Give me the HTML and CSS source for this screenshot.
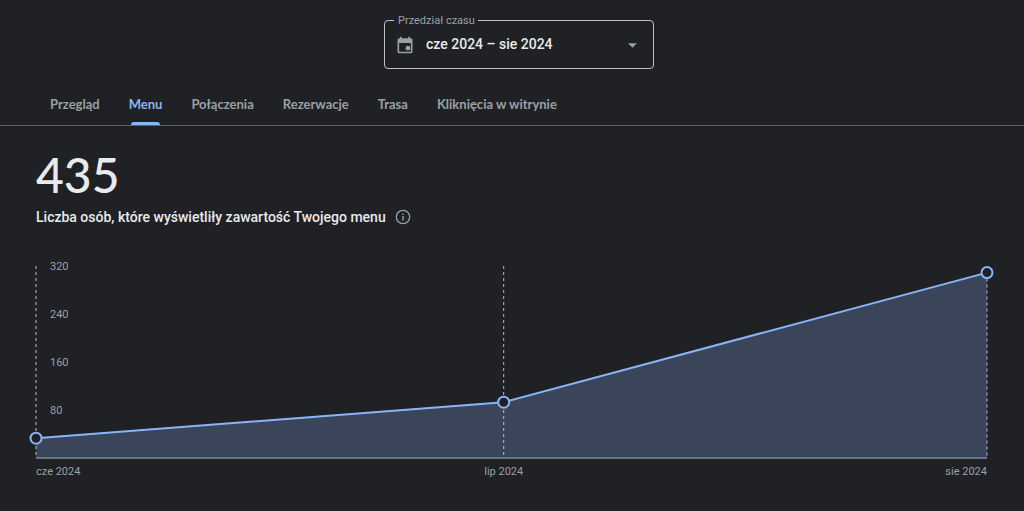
FILE: index.html
```html
<!DOCTYPE html>
<html lang="pl">
<head>
<meta charset="utf-8">
<meta name="viewport" content="width=device-width, initial-scale=1">
<title>Menu</title>
<link rel="stylesheet" href="styles.css">
</head>
<body>
<header class="toolbar">
  <div class="period">
    <label class="period-label" for="period">Przedział czasu</label>
    <svg class="period-icon" viewBox="0 0 24 24" aria-hidden="true"><path fill-rule="evenodd" d="M5 4h1V2h2v2h8V2h2v2h1a2 2 0 0 1 2 2v14a2 2 0 0 1-2 2H5a2 2 0 0 1-2-2V6a2 2 0 0 1 2-2zM5 9.500V20h14V9.500z"/><circle cx="15.500" cy="15.800" r="2.900"/></svg>
    <select class="period-select" id="period">
      <option>cze 2024 – sie 2024</option>
    </select>
    <svg class="period-arrow" viewBox="0 0 10 5" aria-hidden="true"><path d="M0 0h10L5 5z"/></svg>
  </div>
</header>
<nav class="tabs">
  <a class="tab" href="#overview">Przegląd</a>
  <a class="tab tab-active" href="#menu" aria-current="page">Menu</a>
  <a class="tab" href="#calls">Połączenia</a>
  <a class="tab" href="#bookings">Rezerwacje</a>
  <a class="tab" href="#directions">Trasa</a>
  <a class="tab" href="#clicks">Kliknięcia w witrynie</a>
</nav>
<main class="report">
  <h1 class="total">435</h1>
  <div class="summary">
    <p class="summary-text">Liczba osób, które wyświetliły zawartość Twojego menu</p>
    <button class="info" type="button" aria-label="Informacje">
      <svg class="info-icon" viewBox="0 0 16 16" aria-hidden="true"><circle class="info-ring" cx="8" cy="8" r="6.700"/><path d="M7.300 7h1.400v4.500H7.300zM7.300 4.500h1.400v1.400H7.300z"/></svg>
    </button>
  </div>
  <div class="chart">
    <div class="plot">
      <svg class="plot-svg" role="img" aria-label="Wyświetlenia menu: cze 33, lip 93, sie 309">
        <svg width="100%" height="100%" viewBox="0 0 61 320" preserveAspectRatio="none" overflow="visible">
          <path class="area" d="M0 287L30 227L61 11V320H0z"/>
          <path class="trend" d="M0 287L30 227L61 11"/>
        </svg>
        <line class="axis" x1="0" y1="100%" x2="100%" y2="100%"/>
        <line class="guide" x1="0" y1="0" x2="0" y2="100%"/>
        <line class="guide" x1="49.180%" y1="0" x2="49.180%" y2="100%"/>
        <line class="guide" x1="100%" y1="3.400%" x2="100%" y2="100%"/>
        <circle class="point" cx="0" cy="89.690%" r="5.500"/>
        <circle class="point" cx="49.180%" cy="70.940%" r="5.500"/>
        <circle class="point" cx="100%" cy="3.440%" r="5.500"/>
      </svg>
      <div class="scale">
        <span class="tick">320</span>
        <span class="tick">240</span>
        <span class="tick">160</span>
        <span class="tick">80</span>
      </div>
    </div>
    <div class="months">
      <span class="month">cze 2024</span>
      <span class="month">lip 2024</span>
      <span class="month">sie 2024</span>
    </div>
  </div>
</main>
</body>
</html>
```

FILE: styles.css
```css
* {
  box-sizing: border-box;
}

body {
  margin: 0;
  background: #202124;
  color: #e8eaed;
  font-family: Roboto, "Liberation Sans", sans-serif;
}

.toolbar {
  display: flex;
  justify-content: center;
  padding: 20px 24px 14px 38px;
}

.period {
  position: relative;
  width: 270px;
}

.period-select {
  display: block;
  width: 100%;
  height: 49px;
  padding: 0 40px 2px 41px;
  border: 1px solid #bdc1c6;
  border-radius: 4px;
  appearance: none;
  background: transparent;
  color: #e8eaed;
  font: 500 14px/20px Roboto, "Liberation Sans", sans-serif;
}

.period-label {
  position: absolute;
  top: -7px;
  left: 10px;
  padding: 1px 3px 0 4px;
  background: #202124;
  color: #9aa0a6;
  font-size: 11px;
  line-height: 14px;
}

.period-icon {
  position: absolute;
  top: 15px;
  left: 11px;
  width: 20px;
  height: 20px;
  fill: #9aa0a6;
}

.period-arrow {
  position: absolute;
  top: 23px;
  right: 17px;
  width: 9px;
  height: 5px;
  fill: #9aa0a6;
}

.tabs {
  display: flex;
  gap: 29px;
  padding: 0 50px;
  border-bottom: 1px solid #5f6368;
}

.tab {
  position: relative;
  padding: 12px 0;
  color: #9aa0a6;
  font: 700 13px/18px Lato, "Liberation Sans", sans-serif;
  text-decoration: none;
  white-space: nowrap;
}

.tab-active {
  color: #8ab4f8;
}

.tab-active::after {
  content: "";
  position: absolute;
  right: 2px;
  bottom: 0;
  left: 2px;
  height: 3px;
  border-radius: 3px 3px 0 0;
  background: #8ab4f8;
}

.report {
  padding: 23px 37px 0 36px;
}

.total {
  margin: 0;
  font: 500 48px/52px Lato, "Liberation Sans", sans-serif;
}

.summary {
  display: flex;
  align-items: center;
  gap: 9px;
  margin-top: 6px;
}

.summary-text {
  margin: 0;
  font-size: 14px;
  font-weight: 500;
  line-height: 20px;
}

.info {
  display: flex;
  padding: 0;
  border: 0;
  background: none;
}

.info-icon {
  width: 16px;
  height: 16px;
  fill: #9aa0a6;
}

.info-ring {
  fill: none;
  stroke: #9aa0a6;
  stroke-width: 1.3;
}

.chart {
  margin-top: 39px;
  color: #9aa0a6;
  font-size: 11px;
  line-height: 14px;
}

.plot {
  position: relative;
  height: 192px;
}

.plot-svg {
  display: block;
  width: 100%;
  height: 100%;
  overflow: visible;
}

.area {
  fill: #8ab4f8;
  fill-opacity: 0.25;
}

.trend {
  fill: none;
  stroke: #8ab4f8;
  stroke-width: 2;
  vector-effect: non-scaling-stroke;
}

.axis {
  stroke: #697386;
  stroke-width: 2;
}

.guide {
  stroke: #bdc1c6;
  stroke-width: 1;
  stroke-dasharray: 3 3;
}

.point {
  fill: #202124;
  stroke: #8ab4f8;
  stroke-width: 2;
}

.scale {
  position: absolute;
  top: -6px;
  left: 14px;
  display: grid;
  grid-auto-rows: 48px;
}

/* The middle column is centred on 1 July: day 30 of 61. */
.months {
  display: grid;
  grid-template-columns: 15fr 30fr 16fr;
  margin-top: 7px;
}

.month:nth-child(2) {
  text-align: center;
}

.month:last-child {
  text-align: right;
}
```
